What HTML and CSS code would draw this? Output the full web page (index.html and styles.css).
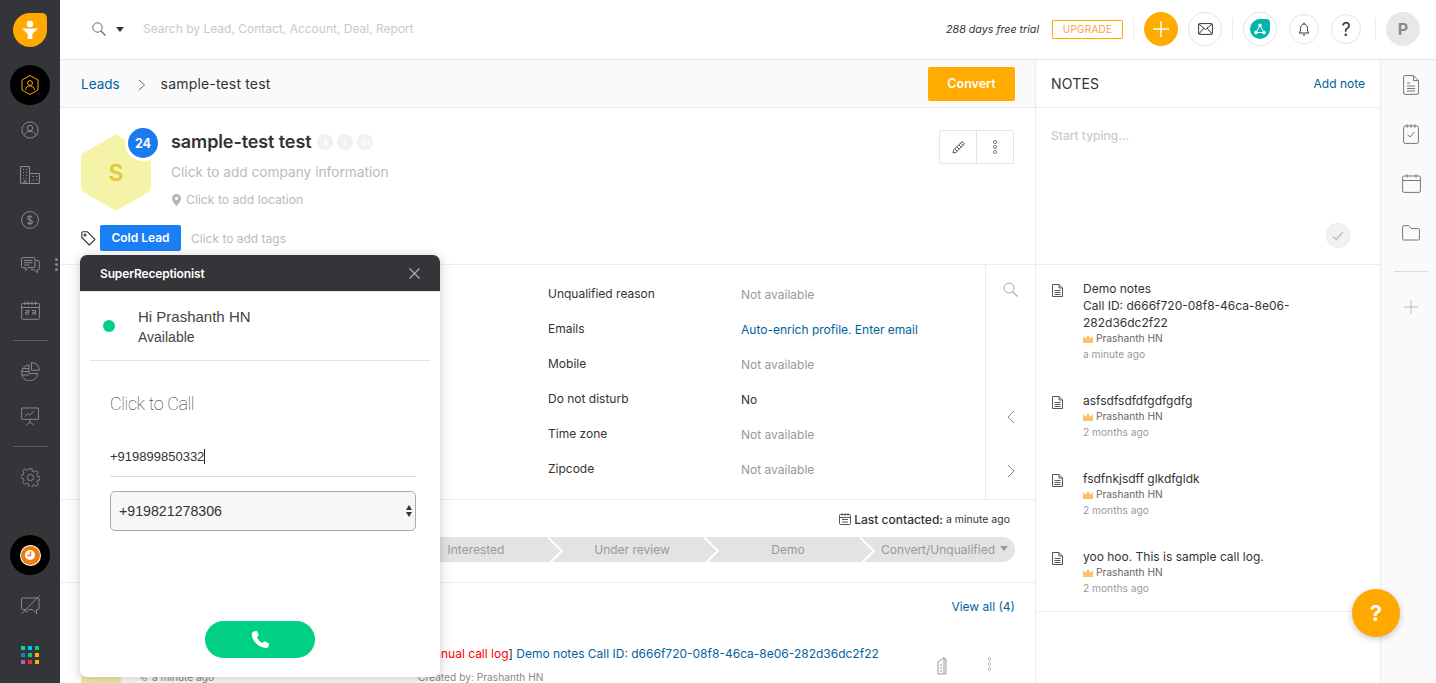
FILE: index.html
```html
<!DOCTYPE html>
<html lang="en">
<head>
<meta charset="utf-8">
<title>sample-test test</title>
<link rel="stylesheet" href="styles.css">
</head>
<body>
<aside class="sidebar">
  <div class="logo">
    <svg width="22" height="22" viewBox="0 0 22 22"><circle cx="11" cy="5" r="3.2" fill="#fff"/><path d="M3 9.500h16l-5.600 5.200V20H8.600v-5.300z" fill="#fff"/></svg>
  </div>
  <nav class="nav">
    <div class="nav-item"><span class="nav-dark">
      <svg width="20" height="22" viewBox="0 0 20 22" fill="none" stroke="#ffa800" stroke-width="1"><path d="M10 1.500l8 4.500v10l-8 4.500-8-4.500V6z" stroke-linejoin="round"/><circle cx="10" cy="9" r="2.400"/><path d="M5.500 16c.4-2.800 2-4 4.500-4s4.100 1.200 4.500 4"/></svg>
    </span></div>
    <div class="nav-item">
      <svg width="18" height="18" viewBox="0 0 20 20" fill="none" stroke="#8a8a8a" stroke-width="1.100"><circle cx="10" cy="10" r="9"/><circle cx="10" cy="7.800" r="3"/><path d="M3.800 15.800c1-3 3.200-4.300 6.200-4.300s5.200 1.300 6.200 4.300"/></svg>
    </div>
    <div class="nav-item">
      <svg width="20" height="18" viewBox="0 0 20 18" fill="none" stroke="#8a8a8a" stroke-width="1"><path d="M.5 17.500V.5h9v17zM10 7.500h9.500v10H10"/><path d="M3 3.500h1M6 3.500h1M3 6.500h1M6 6.500h1M3 9.500h1M6 9.500h1M3 12.500h1M6 12.500h1M12.500 10.500h1.500M16 10.500h1.500M12.500 14h1.500M16 14h1.500M4 17.500v-2.500h2v2.500"/></svg>
    </div>
    <div class="nav-item">
      <svg width="18" height="18" viewBox="0 0 18 18" fill="none" stroke="#8a8a8a" stroke-width="1"><circle cx="9" cy="9" r="8.400"/><path d="M11.300 6.600c-.4-1-1.200-1.400-2.300-1.400-1.300 0-2.300.7-2.300 1.800 0 2.500 4.700 1.400 4.700 4 0 1.100-1 1.800-2.400 1.800-1.200 0-2.100-.5-2.500-1.500M9 3.800v10.400" stroke-width="1.100"/></svg>
    </div>
    <div class="nav-item nav-chat">
      <svg width="19" height="17" viewBox="0 0 19 17" fill="none" stroke="#8a8a8a" stroke-width="1"><path d="M1.500.6h11.500a1 1 0 0 1 1 1v8a1 1 0 0 1-1 1H7l-2.600 2.800v-2.800H1.500a1 1 0 0 1-1-1v-8a1 1 0 0 1 1-1z"/><path d="M3 3.500h8.500M3 5.700h8.500M3 8h5.500M15 3.500h2.300a1 1 0 0 1 1 1v7.200a1 1 0 0 1-1 1h-1v3l-3-3H10"/></svg>
      <span class="kebab"></span>
    </div>
    <div class="nav-item">
      <svg width="19" height="19" viewBox="0 0 19 19" fill="none" stroke="#8a8a8a" stroke-width="1"><rect x=".6" y="2.500" width="17.800" height="15.800" rx="1"/><path d="M.6 6.500h17.800M4 .5v3.500M7.300.5v3.500M11 .5v3.500M14.500.5v3.500M4.500 9.500h3.500v1.700H4.500v1.900H8M11 9.500h3.500v3.600H11M11 11.300h3.500"/></svg>
    </div>
    <div class="nav-rule"></div>
    <div class="nav-item">
      <svg width="19" height="19" viewBox="0 0 19 19" fill="none" stroke="#8a8a8a" stroke-width="1"><path d="M10.500 .6a7.500 7.500 0 0 1 7.800 7.700h-7.800zM8 3a8 8 0 1 0 8.500 8.500H8zM.3 9.500H8M1.500 6.500H8M1 13h7"/></svg>
    </div>
    <div class="nav-item">
      <svg width="18" height="19" viewBox="0 0 19 20" fill="none" stroke="#8a8a8a" stroke-width="1"><path d="M.6 1h17.800v12H1.500a1 1 0 0 1-.9-1zM4 10l3-3 2 1.500L14 4M9.500 13v3.500M5.500 19l4-3 4 3"/></svg>
    </div>
    <div class="nav-rule"></div>
    <div class="nav-item">
      <svg width="19" height="19" viewBox="0 0 20 20" fill="none" stroke="#8a8a8a" stroke-width="1"><circle cx="10" cy="10" r="3.300"/><path d="M8.500.8h3l.5 2.500 1.900.8 2.200-1.400 2.100 2.100-1.400 2.200.8 1.900 2.500.5v3l-2.500.5-.8 1.900 1.400 2.200-2.100 2.100-2.200-1.400-1.900.8-.5 2.500h-3L8 16.700l-1.900-.8-2.200 1.400-2.100-2.100 1.400-2.200-.8-1.900-2.500-.5v-3l2.500-.5.8-1.900-1.400-2.200 2.100-2.100 2.200 1.400 1.900-.8z" stroke-linejoin="round"/></svg>
    </div>
  </nav>
  <div class="nav-bottom">
    <div class="nav-item"><span class="nav-dark">
      <span class="clock"><svg width="12" height="12" viewBox="0 0 12 12"><circle cx="6" cy="6" r="5" fill="#fff"/><path d="M6.500 2.500v4H3" stroke="#f07b10" stroke-width="1.500" fill="none"/></svg></span>
    </span></div>
    <div class="nav-item">
      <svg width="19" height="20" viewBox="0 0 19 20" fill="none" stroke="#8a8a8a" stroke-width="1"><path d="M1.500 3h15.500a1 1 0 0 1 1 1v9.500a1 1 0 0 1-1 1h-1.500v4l-4-4H8l-2.700 2.700-1-2.700H1.500a1 1 0 0 1-1-1V4a1 1 0 0 1 1-1zM.5 19L18.500.5"/></svg>
    </div>
    <div class="nav-item">
      <div class="apps">
        <i class="c1"></i><i class="c2"></i><i class="c3"></i>
        <i class="c4"></i><i class="c3"></i><i class="c5"></i>
        <i class="c6"></i><i class="c7"></i><i class="c5"></i>
      </div>
    </div>
  </div>
</aside>

<div class="app">
  <header class="topbar">
    <div class="search">
      <svg width="14" height="14" viewBox="0 0 14 14" fill="none" stroke="#666" stroke-width="1"><circle cx="5.500" cy="5.500" r="4.700"/><path d="M9 9l4.500 4.500" stroke-width="1.300"/></svg>
      <span class="caret-down"></span>
      <span class="search-text">Search by Lead, Contact, Account, Deal, Report</span>
    </div>
    <div class="top-actions">
      <span class="trial">288 days free trial</span>
      <span class="upgrade">UPGRADE</span>
      <span class="vr"></span>
      <span class="round plus"><svg width="16" height="16" viewBox="0 0 16 16"><path d="M8 0v16M0 8h16" stroke="#fff" stroke-width="1.500"/></svg></span>
      <span class="round round-mail"><svg width="15" height="12" viewBox="0 0 15 12" fill="none" stroke="#333" stroke-width="1"><rect x=".6" y=".6" width="13.800" height="10.800" rx="1"/><path d="M.8 1l6.700 5.500L14.200 1M.8 11l5-5.800M14.200 11l-5-5.800"/></svg></span>
      <span class="vr"></span>
      <span class="round teal-wrap"><span class="teal"><svg width="12" height="12" viewBox="0 0 12 12" fill="none" stroke="#fff" stroke-width="1"><path d="M6 2.500L2 9.500h8z"/><circle cx="6" cy="2.500" r="1.400" fill="#fff"/><circle cx="2" cy="9.500" r="1.400" fill="#fff"/><circle cx="10" cy="9.500" r="1.400" fill="#fff"/></svg></span></span>
      <span class="round small bell"><svg width="12" height="14" viewBox="0 0 12 14" fill="none" stroke="#333" stroke-width="1"><path d="M1 11c1.300-1 1.500-2.300 1.500-4.500C2.500 4 4 2 6 2s3.500 2 3.500 4.500c0 2.200.2 3.500 1.500 4.500zM6 .5V2M4.800 12.500c.3.600.7.900 1.200.9s.9-.3 1.200-.9"/></svg></span>
      <span class="round small help">?</span>
      <span class="vr vr-c"></span>
      <span class="avatar-p">P</span>
    </div>
  </header>

  <div class="workspace">
    <main class="center">
      <div class="crumbs">
        <a class="link crumb-link">Leads</a>
        <svg class="crumb-sep" width="8" height="12" viewBox="0 0 8 12" fill="none" stroke="#666" stroke-width="1"><path d="M1 1l5.500 5L1 11"/></svg>
        <span class="crumb-now">sample-test test</span>
        <button class="convert">Convert</button>
      </div>

      <section class="profile">
        <div class="profile-top">
          <div class="hex-wrap">
            <svg class="hex" width="70" height="75" viewBox="0 0 70 75"><path d="M35 5l30 17v31L35 70 5 53V22z" fill="#f4f3a8" stroke="#f4f3a8" stroke-width="10" stroke-linejoin="round"/></svg>
            <span class="hex-letter">S</span>
            <span class="badge">24</span>
          </div>
          <div class="profile-info">
            <div class="name-line">
              <h1 class="name">sample-test test</h1>
              <span class="soc">f</span><span class="soc">t</span><span class="soc">in</span>
            </div>
            <div class="company">Click to add company information</div>
            <div class="location">
              <svg width="9" height="12" viewBox="0 0 9 12"><path d="M4.500 0C2 0 0 2 0 4.400 0 7.500 4.500 12 4.500 12S9 7.500 9 4.400C9 2 7 0 4.500 0zm0 6a1.600 1.600 0 1 1 0-3.200 1.600 1.600 0 0 1 0 3.200z" fill="#b5b5b5"/></svg>
              <span>Click to add location</span>
            </div>
          </div>
          <div class="edit-group">
            <span class="edit-btn"><svg width="13" height="13" viewBox="0 0 13 13" fill="none" stroke="#555" stroke-width="1"><path d="M1 12l.8-3.200L9.500 1.100a1 1 0 0 1 1.400 0l1 1a1 1 0 0 1 0 1.400L4.200 11.200zM8.500 2.100l2.400 2.400M3 8l2 2M5 6l2 2M7 4l2 2"/></svg></span>
            <span class="edit-btn"><span class="dots"><i></i><i></i><i></i></span></span>
          </div>
        </div>
        <div class="tags">
          <svg width="15" height="15" viewBox="0 0 15 15" fill="none" stroke="#333" stroke-width="1.100"><path d="M.8 1.800a1 1 0 0 1 1-1h4.700l7.500 7.500-5.700 5.700L.8 6.500z" stroke-linejoin="round"/><circle cx="4" cy="4" r="1"/></svg>
          <span class="tag">Cold Lead</span>
          <span class="tag-add">Click to add tags</span>
        </div>
      </section>

      <section class="details">
        <dl class="fields">
          <dt>Unqualified reason</dt><dd class="na">Not available</dd>
          <dt>Emails</dt><dd class="link">Auto-enrich profile. Enter email</dd>
          <dt>Mobile</dt><dd class="na">Not available</dd>
          <dt>Do not disturb</dt><dd>No</dd>
          <dt>Time zone</dt><dd class="na">Not available</dd>
          <dt>Zipcode</dt><dd class="na">Not available</dd>
        </dl>
        <div class="field-tools">
          <svg width="15" height="15" viewBox="0 0 15 15" fill="none" stroke="#aaa" stroke-width="1"><circle cx="6" cy="6" r="5"/><path d="M9.500 9.500l5 5" stroke-width="1.300"/></svg>
          <svg class="tool-prev" width="8" height="14" viewBox="0 0 8 14" fill="none" stroke="#888" stroke-width="1"><path d="M7 1L1 7l6 6"/></svg>
          <svg class="tool-next" width="8" height="14" viewBox="0 0 8 14" fill="none" stroke="#888" stroke-width="1"><path d="M1 1l6 6-6 6"/></svg>
        </div>
      </section>

      <section class="pipeline">
        <div class="last-contact">
          <svg width="12" height="12" viewBox="0 0 12 12" fill="none" stroke="#555" stroke-width="1"><rect x=".5" y="1.500" width="11" height="10" rx="1"/><path d="M.5 4.500h11M3 .2v2.500M6 .2v2.500M9 .2v2.500M3 6.500h6M3 9h6"/></svg>
          <b>Last contacted:</b> <span>a minute ago</span>
        </div>
        <div class="stages">
          <span class="stage stage-first">New</span>
          <span class="stage">Interested</span>
          <span class="stage">Under review</span>
          <span class="stage">Demo</span>
          <span class="stage stage-last">Convert/Unqualified<i class="stage-caret"></i></span>
        </div>
      </section>

      <section class="activity">
        <a class="link view-all">View all (4)</a>
        <div class="act-row">
          <div class="act-line">
            <span class="act-manual">[Manual call log</span><span>]</span> <a class="link">Demo notes Call ID: d666f720-08f8-46ca-8e06-282d36dc2f22</a>
          </div>
          <div class="act-tools">
            <svg width="10" height="18" viewBox="0 0 10 18" fill="none" stroke="#999" stroke-width="1"><path d="M1 5l6-4.500V17H1zM7 2h2v15H7M3 8h2M3 11h2M3 14h2"/></svg>
            <span class="dots dots-light"><i></i><i></i><i></i></span>
          </div>
          <div class="act-meta">
            <span class="act-ago"><svg class="ago-ico" width="9" height="9" viewBox="0 0 9 9" fill="none" stroke="#aaa" stroke-width="1"><path d="M1 1.500L3 .8l1 2-1 1c.5 1 1 1.500 2 2l1-1 2 1-.7 2C4 8 1.500 5 1 1.500z"/></svg>a minute ago</span>
            <span>Created by: Prashanth HN</span>
          </div>
        </div>
      </section>
      <span class="act-avatar"></span>
    </main>

    <aside class="notes">
      <div class="notes-head"><h2>NOTES</h2><a class="link">Add note</a></div>
      <div class="notes-editor">
        <span class="start">Start typing...</span>
        <span class="note-check"><svg width="12" height="10" viewBox="0 0 12 10" fill="none" stroke="#bbb" stroke-width="1.300"><path d="M1 5.500l3.200 3L11 1"/></svg></span>
      </div>
      <ul class="note-list">
        <li class="note">
          <svg class="note-ico" width="11" height="13" viewBox="0 0 11 13" fill="none" stroke="#555" stroke-width="1"><path d="M.5.500h6.500l3.500 3.500v8.500H.5zM7 .5V4h3.500M2.500 6.500h6M2.500 8.500h6M2.500 10.500h6"/></svg>
          <div class="note-body">
            <p>Demo notes<br>Call ID: d666f720-08f8-46ca-8e06-<br>282d36dc2f22</p>
            <div class="who"><svg width="10" height="8" viewBox="0 0 10 8"><path d="M0 1l2.500 2.500L5 0l2.500 3.500L10 1v7H0z" fill="#fbc266"/></svg>Prashanth HN</div>
            <div class="when">a minute ago</div>
          </div>
        </li>
        <li class="note">
          <svg class="note-ico" width="11" height="13" viewBox="0 0 11 13" fill="none" stroke="#555" stroke-width="1"><path d="M.5.500h6.500l3.500 3.500v8.500H.5zM7 .5V4h3.500M2.500 6.500h6M2.500 8.500h6M2.500 10.500h6"/></svg>
          <div class="note-body">
            <p>asfsdfsdfdfgdfgdfg</p>
            <div class="who"><svg width="10" height="8" viewBox="0 0 10 8"><path d="M0 1l2.500 2.500L5 0l2.500 3.500L10 1v7H0z" fill="#fbc266"/></svg>Prashanth HN</div>
            <div class="when">2 months ago</div>
          </div>
        </li>
        <li class="note">
          <svg class="note-ico" width="11" height="13" viewBox="0 0 11 13" fill="none" stroke="#555" stroke-width="1"><path d="M.5.500h6.500l3.500 3.500v8.500H.5zM7 .5V4h3.500M2.500 6.500h6M2.500 8.500h6M2.500 10.500h6"/></svg>
          <div class="note-body">
            <p>fsdfnkjsdff glkdfgldk</p>
            <div class="who"><svg width="10" height="8" viewBox="0 0 10 8"><path d="M0 1l2.500 2.500L5 0l2.500 3.500L10 1v7H0z" fill="#fbc266"/></svg>Prashanth HN</div>
            <div class="when">2 months ago</div>
          </div>
        </li>
        <li class="note">
          <svg class="note-ico" width="11" height="13" viewBox="0 0 11 13" fill="none" stroke="#555" stroke-width="1"><path d="M.5.500h6.500l3.500 3.500v8.500H.5zM7 .5V4h3.500M2.500 6.500h6M2.500 8.500h6M2.500 10.500h6"/></svg>
          <div class="note-body">
            <p>yoo hoo. This is sample call log.</p>
            <div class="who"><svg width="10" height="8" viewBox="0 0 10 8"><path d="M0 1l2.500 2.500L5 0l2.500 3.500L10 1v7H0z" fill="#fbc266"/></svg>Prashanth HN</div>
            <div class="when">2 months ago</div>
          </div>
        </li>
      </ul>
    </aside>

    <aside class="rail">
      <svg width="16" height="20" viewBox="0 0 16 20" fill="none" stroke="#777" stroke-width="1"><path d="M2 .6h8.500l5 5V18a1.400 1.400 0 0 1-1.400 1.400H2A1.400 1.400 0 0 1 .6 18V2A1.400 1.400 0 0 1 2 .6zM10.500.8v4.800h4.800M4 8h3M4 11h8M4 13.500h8M4 16h8"/></svg>
      <svg width="16" height="20" viewBox="0 0 16 20" fill="none" stroke="#777" stroke-width="1"><rect x=".6" y="2" width="14.800" height="17.400" rx="1.500"/><path d="M4 .2v3.500M8 .2v3.500M12 .2v3.500M4.500 10.500l2.500 2.500 4.500-5"/></svg>
      <svg width="19" height="19" viewBox="0 0 19 19" fill="none" stroke="#777" stroke-width="1"><rect x=".6" y="2" width="17.800" height="16.400" rx="1.500"/><path d="M.6 6.500h17.800M5 .2v3.500M14 .2v3.500"/></svg>
      <svg width="18" height="16" viewBox="0 0 18 16" fill="none" stroke="#777" stroke-width="1"><path d="M.6 14V1.600a1 1 0 0 1 1-1h5l2.500 3h7.300a1 1 0 0 1 1 1V14a1 1 0 0 1-1 1H1.600a1 1 0 0 1-1-1z"/></svg>
      <span class="rail-rule"></span>
      <svg width="14" height="14" viewBox="0 0 14 14"><path d="M7 0v14M0 7h14" stroke="#bbb" stroke-width="1"/></svg>
    </aside>
  </div>
</div>

<section class="phone">
  <div class="phone-head"><strong>SuperReceptionist</strong>
    <svg width="11" height="11" viewBox="0 0 11 11"><path d="M.5.500l10 10M10.500.5l-10 10" stroke="#aaa" stroke-width="1.300"/></svg>
  </div>
  <div class="phone-status">
    <span class="dot"></span>
    <div class="status-text"><span class="hi">Hi Prashanth HN</span><br>Available</div>
  </div>
  <h3 class="phone-title">Click to Call</h3>
  <div class="phone-input"><span>+919899850332</span><i class="text-caret"></i></div>
  <div class="phone-select">+919821278306
    <span class="stepper"><i class="up"></i><i class="down"></i></span>
  </div>
  <button class="call">
    <svg width="20" height="20" viewBox="0 0 20 20"><path d="M4.500 1.200L7 1l1.800 4.300-1.900 1.900c.9 2.400 2.800 4.600 5.600 5.900l1.900-1.800 4.500 1.900-.2 2.700c-.2 1.400-1.300 2.300-2.900 2.200C8.500 17.500 2.200 11 1.800 4.400 1.700 2.800 2.900 1.500 4.500 1.200z" fill="#fff"/></svg>
  </button>
</section>

<button class="fab">?</button>
</body>
</html>
```
FILE: styles.css
```css
* { box-sizing: border-box; }
html, body { height: 100%; }
body {
  margin: 0;
  display: flex;
  height: 683px;
  overflow: hidden;
  font-family: "Inter", "Liberation Sans", sans-serif;
  font-size: 12.5px;
  color: #333;
  background: #fff;
  position: relative;
}
h1, h2, h3, p, ul, dl, dd { margin: 0; padding: 0; }
button { font-family: inherit; border: 0; cursor: pointer; }
.link { color: #00639e; text-decoration: none; }

/* sidebar */
.sidebar {
  width: 60px;
  flex: none;
  background: #333538;
  display: flex;
  flex-direction: column;
  padding-top: 13px;
}
.logo {
  width: 34px; height: 34px;
  margin: 0 0 16px 13px;
  background: #ffa800;
  border-radius: 17px 5px 17px 17px;
  display: flex; align-items: center; justify-content: center;
}
.nav { display: flex; flex-direction: column; gap: 1px; }
.nav-item { height: 44px; display: flex; align-items: center; justify-content: center; position: relative; }
.nav-dark {
  width: 40px; height: 40px;
  background: #000;
  border-radius: 50%;
  display: flex; align-items: center; justify-content: center;
}
.nav-rule { height: 1px; background: #5b5c5e; margin: 7px 12px 7px 13px; }
.kebab {
  position: absolute; right: 2px; top: 15px;
  width: 3px; height: 3px; border-radius: 50%;
  background: #8a8a8a;
  box-shadow: 0 5px 0 #8a8a8a, 0 10px 0 #8a8a8a;
}
.nav-bottom { margin-top: auto; padding-bottom: 6px; display: flex; flex-direction: column; gap: 6px; }
.clock {
  width: 19px; height: 19px; border-radius: 50%;
  background: #f07b10;
  box-shadow: 0 0 0 1px #fff;
  display: flex; align-items: center; justify-content: center;
}
.apps { display: grid; grid-template-columns: repeat(3, 4px); gap: 3px; }
.apps i { width: 4px; height: 4px; display: block; }
.c1 { background: #00d5b0; }
.c2 { background: #00c5e8; }
.c3 { background: #00cf7f; }
.c4 { background: #1d7ec8; }
.c5 { background: #ffab00; }
.c6 { background: #b060b8; }
.c7 { background: #f0322a; }

/* app */
.app { flex: 1; min-width: 0; display: flex; flex-direction: column; }
.topbar {
  height: 60px; flex: none;
  border-bottom: 1px solid #e8e8e8;
  display: flex; align-items: center; justify-content: space-between;
  padding: 0 16px 1px 32px;
}
.search { display: flex; align-items: center; }
.caret-down {
  width: 0; height: 0; margin-left: 10px;
  border: 4px solid transparent; border-top: 5px solid #333; border-bottom: 0;
}
.search-text { margin-left: 19px; color: #c9c9c9; font-size: 12px; margin-top: -1px; }
.top-actions { display: flex; align-items: center; }
.trial { font-style: italic; font-size: 10.700px; color: #333; }
.upgrade {
  width: 71px; height: 19px; margin-left: 13px;
  border: 1px solid #ffab00; border-radius: 1px;
  color: #ff9d3c; font-size: 10px; letter-spacing: .2px;
  display: flex; align-items: center; justify-content: center;
}
.vr { width: 1px; height: 22px; background: #ececec; margin: 0 10px; }
.vr-c { margin: 0 10px 0 14px; }
.round {
  width: 34px; height: 34px; border-radius: 50%;
  border: 1px solid #e4e4e4;
  display: flex; align-items: center; justify-content: center;
  margin-right: 10px;
}
.round-mail { margin-right: 0; }
.plus { background: #ffab00; border-color: #ffab00; }
.teal-wrap { margin-right: 12px; }
.teal {
  width: 20px; height: 20px; background: #00b5ad;
  border-radius: 10px 4px 10px 10px;
  display: flex; align-items: center; justify-content: center;
}
.small { width: 30px; height: 30px; margin-right: 12px; }
.small.help { margin-right: 0; font-size: 18px; color: #333; }
.avatar-p {
  width: 34px; height: 34px; border-radius: 50%; background: #e8e8e8;
  display: flex; align-items: center; justify-content: center;
  color: #8a8a8a; font-weight: 700; font-size: 16px;
}

.workspace { flex: 1; display: flex; min-height: 0; }
.center { width: 976px; flex: none; border-right: 1px solid #ececec; position: relative; overflow: hidden; }

.crumbs {
  height: 48px;
  background: #fafafa;
  border-bottom: 1px solid #ececec;
  display: flex; align-items: center;
  padding: 0 20px 0 21px;
}
.crumb-link { font-size: 13.500px; }
.crumb-sep { margin: 2px 0 0 18px; }
.crumb-now { margin-left: 15px; font-size: 14px; color: #333; letter-spacing: .17px; }
.convert {
  margin-left: auto;
  width: 87px; height: 34px;
  background: #ffab00; color: #fff;
  font-weight: 600; font-size: 12.500px;
  border-radius: 2px;
}

.profile { height: 157px; border-bottom: 1px solid #ececec; padding: 22px 21px 0; }
.profile-top { display: flex; height: 95px; }
.hex-wrap { position: relative; width: 70px; height: 75px; margin-top: 5px; flex: none; }
.hex { display: block; }
.hex-letter {
  position: absolute; inset: 0;
  display: flex; align-items: center; justify-content: center;
  color: #e3c63c; font-size: 23px; font-weight: 600;
}
.badge {
  position: absolute; left: 44px; top: -10px;
  width: 36px; height: 36px;
  background: #1a7bf0; color: #fff;
  border: 3px solid #fff; border-radius: 50%;
  display: flex; align-items: center; justify-content: center;
  font-weight: 700; font-size: 12.500px;
}
.profile-info { margin-left: 20px; }
.name-line { display: flex; align-items: center; height: 24px; margin-top: -1px; }
.name { font-size: 18px; font-weight: 600; color: #333; letter-spacing: -.1px; margin-right: 6px; }
.soc {
  width: 16px; height: 16px; border-radius: 50%; background: #f1f1f1; color: #fff;
  font-size: 9px; font-weight: 700; margin-right: 4px; margin-top: 2px;
  display: flex; align-items: center; justify-content: center;
}
.company { margin-top: 11px; color: #bbb; font-size: 13.700px; }
.location { margin-top: 12px; display: flex; align-items: center; color: #bbb; font-size: 12.200px; padding-left: 1px; }
.location span { margin-left: 5px; }
.edit-group { margin-left: auto; display: flex; height: 34px; border: 1px solid #e6e6e6; border-radius: 2px; width: 75px; }
.edit-btn { flex: 1; display: flex; align-items: center; justify-content: center; }
.edit-btn + .edit-btn { border-left: 1px solid #e6e6e6; }
.dots { display: flex; flex-direction: column; gap: 1.500px; }
.dots i { width: 3.500px; height: 3.500px; border: 1px solid #666; border-radius: 50%; display: block; }
.dots-light i { border-color: #aaa; }
.tags { display: flex; align-items: center; height: 26px; }
.tag {
  margin-left: 4px;
  width: 81px; height: 26px; background: #1a7ef5; color: #fff; border-radius: 2px;
  display: flex; align-items: center; justify-content: center;
  font-weight: 600; font-size: 12px; padding-bottom: 1px;
}
.tag-add { margin-left: 10px; color: #bbb; font-size: 12px; }

.details { height: 235px; border-bottom: 1px solid #ececec; display: flex; }
.fields {
  flex: 1;
  display: grid;
  grid-template-columns: 193px 1fr;
  grid-auto-rows: 35px;
  align-items: center;
  padding: 11px 0 0 488px;
}
.fields dt { font-size: 12px; color: #333; margin-top: -1px; }
.fields dd { font-size: 12px; margin-top: 1px; }
.na { color: #999; }
.field-tools {
  width: 50px; flex: none; border-left: 1px solid #ececec;
  display: flex; flex-direction: column; align-items: center;
  padding-top: 17px;
}
.tool-prev { margin-top: 113px; }
.tool-next { margin-top: 40px; }

.pipeline { height: 83px; border-bottom: 1px solid #ececec; padding: 12px 20px 0 21px; }
.last-contact { display: flex; align-items: center; justify-content: flex-end; padding-right: 5px; height: 14px; font-size: 12px; color: #333; }
.last-contact b { font-weight: 500; margin: 0 3px 0 3px; }
.last-contact span { font-size: 10.500px; }
.stages { margin-top: 11px; height: 25px; display: flex; background: #e3e3e3; border-radius: 0 13px 13px 0; overflow: hidden; color: #999; font-size: 12px; }
.stage {
  width: 156px; flex: none; position: relative;
  display: flex; align-items: center; justify-content: center;
}
.stage::after {
  content: ""; position: absolute; right: -5px; top: 3.500px;
  width: 18px; height: 18px;
  border-top: 2px solid #fff; border-right: 2px solid #fff;
  transform: rotate(45deg);
}
.stage-first { width: 317px; }
.stage-last { flex: 1; width: auto; justify-content: flex-start; padding-left: 15px; }
.stage-last::after { display: none; }
.stage-caret {
  width: 0; height: 0; margin: -2px 0 0 5px;
  border: 4px solid transparent; border-top: 5px solid #999; border-bottom: 0;
}

.activity { position: relative; padding: 16px 20px 0 92px; }
.view-all { display: block; text-align: right; font-size: 12px; line-height: 16px; }
.act-row { position: relative; margin-top: 31px; }
.act-line { padding-left: 267px; font-size: 12px; line-height: 16px; white-space: nowrap; }
.act-manual { color: #f00; }
.act-meta { margin-top: 8px; display: flex; font-size: 10.200px; color: #888; line-height: 14px; }
.act-ago { width: 266px; position: relative; }
.ago-ico { position: absolute; left: -13px; top: 3px; }
.act-tools { position: absolute; right: 24px; top: 11px; display: flex; align-items: flex-start; gap: 41px; }
.act-avatar {
  position: absolute; left: 21px; top: 600px;
  width: 40px; height: 40px; border-radius: 50%;
  background: #f0efa6;
}

/* notes */
.notes { width: 344px; flex: none; display: flex; flex-direction: column; }
.notes-head {
  height: 48px; border-bottom: 1px solid #ececec;
  display: flex; align-items: center; justify-content: space-between;
  padding: 0 15px 1px;
}
.notes-head h2 { font-size: 14px; font-weight: 400; color: #333; letter-spacing: .2px; }
.notes-head a { font-size: 12px; }
.notes-editor {
  height: 157px; border-bottom: 1px solid #ececec; position: relative;
  padding: 20px 15px;
}
.start { color: #ccc; font-size: 12px; font-weight: 500; }
.note-check {
  position: absolute; right: 30px; top: 115px;
  width: 24px; height: 25px; border-radius: 50%;
  background: #f2f2f2; border: 1px solid #e8e8e8;
  display: flex; align-items: center; justify-content: center;
}
.note-list { list-style: none; padding: 15px 15px 15px 16px; border-bottom: 1px solid #f0f0f0; }
.note { display: flex; margin-bottom: 30px; }
.note:last-child { margin-bottom: 0; }
.note-ico { flex: none; margin: 4px 20px 0 0; }
.note-body p { font-size: 12px; line-height: 17px; color: #333; }
.who { font-size: 10.200px; line-height: 15px; color: #666; display: flex; align-items: center; }
.who svg { margin-right: 3px; }
.when { font-size: 10.200px; line-height: 16px; color: #999; }

/* rail */
.rail {
  flex: 1; background: #fafafa; border-left: 1px solid #ececec;
  display: flex; flex-direction: column; align-items: center;
  padding: 15px 0 0 5px;
}
.rail svg:nth-child(2) { margin-top: 29px; }
.rail svg:nth-child(3) { margin-top: 30px; }
.rail svg:nth-child(4) { margin-top: 32px; }
.rail-rule { width: 35px; height: 1px; background: #ddd; margin-top: 30px; }
.rail svg:last-child { margin-top: 28px; }

/* phone popup */
.phone {
  position: absolute; left: 80px; top: 255px;
  width: 360px; height: 422px;
  background: #fff; border-radius: 7px;
  box-shadow: 0 2px 12px rgba(0,0,0,.22);
  overflow: hidden;
  font-family: "Liberation Sans", Arial, sans-serif;
}
.phone-head {
  height: 37px; background: #333538; color: #fff;
  display: flex; align-items: center; justify-content: space-between;
  padding: 0 20px;
  font-family: "Inter", sans-serif; font-size: 12px;
  border-bottom: 1px solid #e8e8e8;
}
.phone-head strong { font-weight: 600; letter-spacing: -.15px; }
.phone-status {
  margin: 0 10px; height: 69px; border-bottom: 1px solid #e4e4e4;
  display: flex; align-items: center; padding-left: 13px;
  font-size: 14px; line-height: 20px; color: #444;
}
.status-text { padding-top: 2px; }
.hi { font-size: 15px; }
.dot { width: 12px; height: 12px; border-radius: 50%; background: #00d084; margin-right: 23px; }
.phone-title {
  margin: 31px 0 0 30px;
  font-family: "Roboto", sans-serif; font-weight: 100; font-size: 18px; line-height: 24px;
  letter-spacing: -.4px; color: #222;
}
.phone-input {
  margin: 31px 24px 0 30px; height: 30px;
  border-bottom: 1px solid #d8dfe6;
  font-size: 13px; color: #333;
  display: flex; align-items: flex-start; padding-top: 2px;
}
.text-caret { width: 1px; height: 15px; background: #222; }
.phone-select {
  margin: 14px 24px 0 30px; height: 40px;
  border: 1px solid #aaa; border-radius: 5px; background: #f7f7f7;
  display: flex; align-items: center; justify-content: space-between;
  padding: 0 3px 0 8px; font-size: 14.200px; color: #333;
}
.stepper { display: flex; flex-direction: column; gap: 2px; }
.stepper i { display: block; width: 0; height: 0; border: 3.500px solid transparent; }
.stepper .up { border-bottom: 5px solid #333; border-top: 0; }
.stepper .down { border-top: 5px solid #333; border-bottom: 0; }
.call {
  display: flex; align-items: center; justify-content: center;
  width: 110px; height: 37px; margin: 90px 0 0 125px;
  background: #00d084; border-radius: 19px; padding: 0;
}
.fab {
  position: absolute; left: 1352px; top: 589px;
  width: 48px; height: 48px; border-radius: 50%;
  background: #ffa800; color: #fff;
  font-size: 22px; font-weight: 700;
  box-shadow: 0 2px 6px rgba(0,0,0,.22);
}
```
